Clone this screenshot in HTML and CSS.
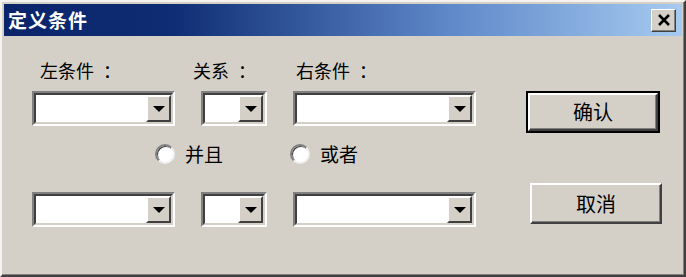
FILE: index.html
```html
<!DOCTYPE html>
<html lang="zh-CN">
  <head>
    <meta charset="UTF-8" />
    <title>定义条件</title>
    <link rel="stylesheet" href="styles.css">
  </head>
  <body>
    <div class="window">
      <div class="titlebar">
        <span class="title">定义条件</span>
        <button class="close-btn" type="button">
          <svg width="14" height="12" viewBox="0 0 14 12">
            <path d="M2 1 L12 11 M12 1 L2 11" stroke="#000" stroke-width="2.6" fill="none" />
          </svg>
        </button>
      </div>
      <div class="dialog-body">
        <div class="fields">
          <div class="cols labels">
            <span class="label label-left">左条件<span class="colon">：</span></span>
            <span class="label label-rel">关系<span class="colon">：</span></span>
            <span class="label label-right">右条件<span class="colon">：</span></span>
          </div>
          <div class="cols combo-row">
            <div class="combo"><div class="combo-inner"><span class="drop-btn"><i class="arrow"></i></span></div></div>
            <div class="combo"><div class="combo-inner"><span class="drop-btn"><i class="arrow"></i></span></div></div>
            <div class="combo"><div class="combo-inner"><span class="drop-btn"><i class="arrow"></i></span></div></div>
          </div>
          <div class="radios">
            <label class="radio"><span class="radio-dot"></span>并且</label>
            <label class="radio"><span class="radio-dot"></span>或者</label>
          </div>
          <div class="cols combo-row second">
            <div class="combo"><div class="combo-inner"><span class="drop-btn"><i class="arrow"></i></span></div></div>
            <div class="combo"><div class="combo-inner"><span class="drop-btn"><i class="arrow"></i></span></div></div>
            <div class="combo"><div class="combo-inner"><span class="drop-btn"><i class="arrow"></i></span></div></div>
          </div>
        </div>
        <div class="actions">
          <button class="btn btn-default" type="button">确认</button>
          <button class="btn btn-cancel" type="button">取消</button>
        </div>
      </div>
    </div>
  </body>
</html>
```

FILE: styles.css
```css
body {
  margin: 0;
  font-family: "Noto Sans CJK SC", "DejaVu Sans", sans-serif;
  background-color: #d4d0c8;
}
.window {
  width: 686px;
  height: 277px;
  box-sizing: border-box;
  background-color: #d4d0c8;
  border: 2px solid;
  border-color: #f4f3f0 #404040 #404040 #f4f3f0;
  padding: 2px;
  box-shadow: inset -1px -1px 0 #808080;
}
.titlebar {
  height: 32px;
  display: flex;
  align-items: center;
  justify-content: space-between;
  padding: 0 6px 0 4px;
  background: linear-gradient(to right, #0a246a 0%, #0f2d74 25%, #5d87c8 65%, #a6caf0 100%);
}
.title {
  color: #fff;
  font-size: 19px;
  font-weight: bold;
  line-height: 20px;
  letter-spacing: 1px;
}
.close-btn {
  width: 25px;
  height: 23px;
  padding: 0;
  display: flex;
  align-items: center;
  justify-content: center;
  background-color: #d4d0c8;
  border: 1px solid;
  border-color: #fff #404040 #404040 #fff;
  box-shadow: inset -1px -1px 0 #808080;
}
.dialog-body {
  display: flex;
}
.fields {
  padding: 25px 0 0 28px;
}
.cols {
  display: grid;
  grid-template-columns: 143px 66px 183px;
  column-gap: 26px;
}
.label {
  font-size: 18px;
  line-height: 18px;
  white-space: nowrap;
}
.colon {
  margin-left: 9px;
}
.label-left {
  margin-left: 8px;
}
.label-rel {
  margin-left: -8px;
}
.label-right {
  margin-left: 3px;
}
.combo-row {
  margin-top: 12px;
}
.combo-row.second {
  margin-top: 27px;
}
.combo {
  height: 35px;
  box-sizing: border-box;
  border: 2px solid;
  border-color: #808080 #fff #fff #808080;
}
.combo-inner {
  height: 100%;
  box-sizing: border-box;
  border: 2px solid;
  border-color: #404040 #d4d0c8 #d4d0c8 #404040;
  background-color: #fff;
  display: flex;
  justify-content: flex-end;
}
.drop-btn {
  width: 25px;
  box-sizing: border-box;
  background-color: #d4d0c8;
  border: 2px solid;
  border-color: #fff #404040 #404040 #fff;
  display: flex;
  align-items: center;
  justify-content: center;
}
.arrow {
  width: 0;
  height: 0;
  border-left: 6px solid transparent;
  border-right: 6px solid transparent;
  border-top: 6px solid #000;
}
.radios {
  display: flex;
  gap: 67px;
  padding-left: 123px;
  margin-top: 17px;
  height: 22px;
  align-items: center;
}
.radio {
  display: flex;
  align-items: center;
  gap: 10px;
  font-size: 19px;
  line-height: 20px;
}
.radio-dot {
  width: 20px;
  height: 20px;
  box-sizing: border-box;
  border-radius: 50%;
  background-color: #fff;
  border: 2px solid;
  border-color: #808080 #f0f0f0 #f0f0f0 #808080;
  box-shadow: inset 1px 1px 0 #404040;
}
.actions {
  display: flex;
  flex-direction: column;
  padding: 56px 0 0 52px;
  gap: 52px;
}
.btn {
  width: 132px;
  height: 41px;
  font-family: inherit;
  font-size: 20px;
  line-height: 20px;
  padding: 0;
  background-color: #d4d0c8;
  color: #000;
  border: 2px solid;
  border-color: #fff #404040 #404040 #fff;
  box-shadow: inset -1px -1px 0 #808080;
}
.btn-default {
  outline: 2px solid #000;
  width: 130px;
  height: 38px;
  margin: 1px 0 0 0;
}
.btn-cancel {
  margin-left: 2px;
}
```
